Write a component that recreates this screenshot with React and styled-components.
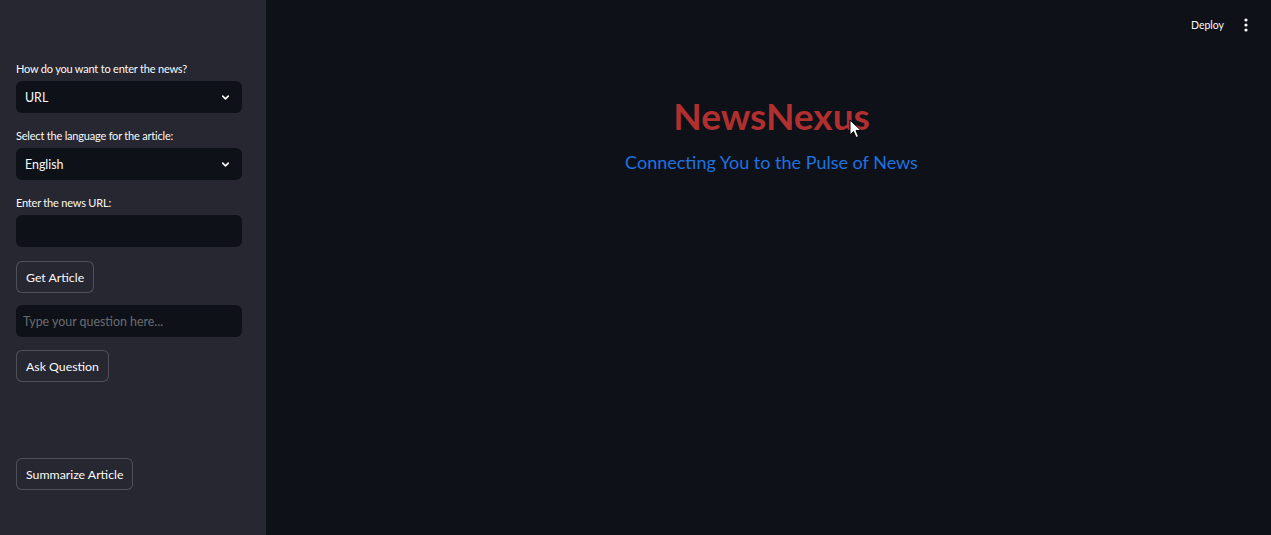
import React from 'react'
import styled, { createGlobalStyle } from 'styled-components'

const Global = createGlobalStyle`
  html, body {
    margin: 0;
    padding: 0;
    background: #0e1117;
  }
  body {
    font-family: Lato, 'Open Sans', sans-serif;
    color: #fafafa;
  }
`

const Page = styled.div`
  display: flex;
  width: 1271px;
  height: 535px;
  overflow: hidden;
  background: #0e1117;
  position: relative;
`

const Sidebar = styled.aside`
  width: 266px;
  flex-shrink: 0;
  background: #262730;
  box-sizing: border-box;
  padding: 61px 24px 0 16px;
  display: flex;
  flex-direction: column;
`

const Field = styled.div`
  display: flex;
  flex-direction: column;
  margin-bottom: ${(p) => p.$gap || 15}px;
`

const Label = styled.label`
  font-size: 11px;
  letter-spacing: -0.2px;
  line-height: 16px;
  margin-bottom: 4px;
  color: #fafafa;
`

const Select = styled.div`
  height: 32px;
  border-radius: 6px;
  background: #0e1117;
  display: flex;
  align-items: center;
  justify-content: space-between;
  padding: 0 11px 0 9px;
  font-size: 12.4px;
`

const Input = styled.div`
  height: 32px;
  border-radius: 6px;
  background: #0e1117;
  display: flex;
  align-items: center;
  padding: 0 7px;
  font-size: 12.4px;
  color: ${(p) => (p.$placeholder ? 'rgba(250,250,250,0.4)' : '#fafafa')};
`

const Button = styled.button`
  align-self: flex-start;
  height: 32px;
  box-sizing: border-box;
  padding: 0 9px;
  border-radius: 6px;
  border: 1px solid rgba(250, 250, 250, 0.2);
  background: #262730;
  color: #fafafa;
  font-family: inherit;
  font-size: 12.3px;
  margin-bottom: ${(p) => p.$gap || 12}px;
`

const Main = styled.main`
  flex: 1;
  display: flex;
  flex-direction: column;
  align-items: center;
  padding-left: 6px;
`

const Header = styled.header`
  align-self: stretch;
  display: flex;
  justify-content: flex-end;
  align-items: center;
  height: 50px;
  padding-right: 23px;
  gap: 20px;
`

const Deploy = styled.span`
  font-size: 10.5px;
  color: #fafafa;
`

const Title = styled.h1`
  margin: 42px 0 0;
  font-size: 37px;
  font-weight: 700;
  color: #b22f2f;
  line-height: 48px;
  position: relative;
`

const Subtitle = styled.p`
  margin: 9px 0 0;
  font-size: 18px;
  color: #1f72e0;
  line-height: 26px;
`

const Cursor = styled.svg`
  position: absolute;
  left: 176px;
  top: 27px;
`

const Chevron = () => (
  <svg width="11" height="11" viewBox="0 0 24 24" fill="none" stroke="#fafafa" strokeWidth="3.5" strokeLinecap="round" strokeLinejoin="round">
    <path d="M6 9l6 6 6-6" />
  </svg>
)

const Kebab = () => (
  <svg width="4" height="14" viewBox="0 0 4 14" fill="#fafafa">
    <circle cx="2" cy="2" r="1.6" />
    <circle cx="2" cy="7" r="1.6" />
    <circle cx="2" cy="12" r="1.6" />
  </svg>
)

const App = () => (
  <Page>
    <Global />
    <Sidebar>
      <Field>
        <Label>How do you want to enter the news?</Label>
        <Select>
          URL
          <Chevron />
        </Select>
      </Field>
      <Field>
        <Label>Select the language for the article:</Label>
        <Select>
          English
          <Chevron />
        </Select>
      </Field>
      <Field $gap={14}>
        <Label>Enter the news URL:</Label>
        <Input />
      </Field>
      <Button>Get Article</Button>
      <Field $gap={13}>
        <Input $placeholder>Type your question here...</Input>
      </Field>
      <Button $gap={76}>Ask Question</Button>
      <Button>Summarize Article</Button>
    </Sidebar>
    <Main>
      <Header>
        <Deploy>Deploy</Deploy>
        <Kebab />
      </Header>
      <Title>
        NewsNexus
        <Cursor width="14" height="20" viewBox="0 0 14 20">
          <path d="M1 1 L1 16 L4.5 12.5 L7 18.5 L9.5 17.5 L7 11.5 L12 11.5 Z" fill="#ffffff" stroke="#000" strokeWidth="1" />
        </Cursor>
      </Title>
      <Subtitle>Connecting You to the Pulse of News</Subtitle>
    </Main>
  </Page>
)

export default App
